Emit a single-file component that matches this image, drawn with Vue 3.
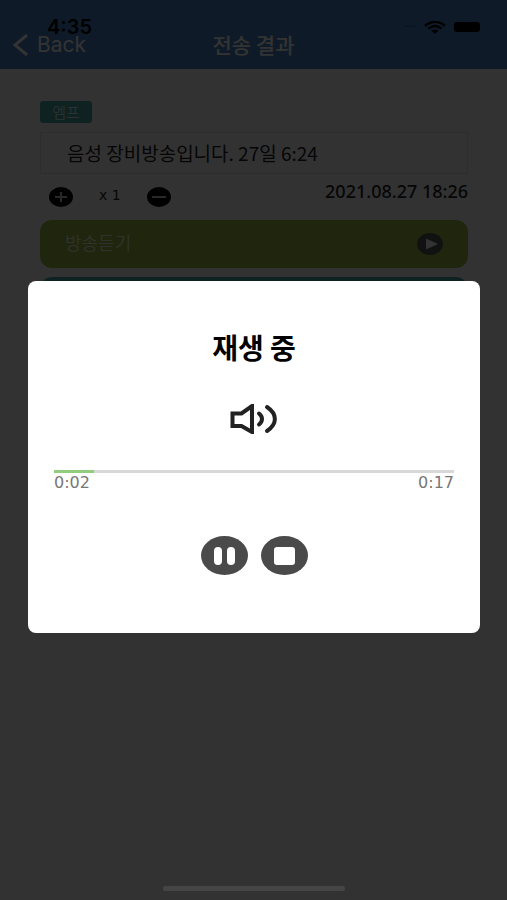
<script setup>
import { ref } from 'vue'

const count = ref(1)
const elapsed = ref(1.7)
const duration = ref(17)
</script>

<template>
  <div class="screen">
    <header class="header">
      <div class="status">
        <span class="clock">4:35</span>
        <span class="indicators">
          <span class="signal">····</span>
          <svg class="wifi" viewBox="0 0 22 13" aria-hidden="true">
            <path d="M1 4.8C7-.4 15-.4 21 4.8" />
            <path d="M4.5 7.6c4-3.2 9-3.2 13 0" />
            <path class="solid" d="M7.4 9.6c2.2-1.6 5-1.6 7.2 0L11 13z" />
          </svg>
          <span class="battery"></span>
        </span>
      </div>
      <nav class="nav">
        <button class="back" type="button">
          <svg viewBox="0 0 16 22" aria-hidden="true"><path d="M14 1 2 11l12 10" /></svg>
          <span>Back</span>
        </button>
        <h1>전송 결과</h1>
      </nav>
    </header>

    <main class="content">
      <span class="badge">엠프</span>
      <p class="message">음성 장비방송입니다. 27일 6:24</p>
      <div class="meta">
        <div class="stepper">
          <button type="button" aria-label="plus" @click="count++">
            <svg viewBox="0 0 24 20"><ellipse cx="12" cy="10" rx="12" ry="10" /><path d="M6 10h12M12 5v10" /></svg>
          </button>
          <span>x {{ count }}</span>
          <button type="button" aria-label="minus" @click="count--">
            <svg viewBox="0 0 24 20"><ellipse cx="12" cy="10" rx="12" ry="10" /><path d="M5 10h14" /></svg>
          </button>
        </div>
        <time datetime="2021-08-27T18:26">2021.08.27 18:26</time>
      </div>
      <button class="row listen" type="button">
        <span>방송듣기</span>
        <svg viewBox="0 0 26 22" aria-hidden="true">
          <ellipse cx="13" cy="11" rx="13" ry="11" />
          <path d="M9 5.500v11L21 11z" />
        </svg>
      </button>
      <div class="row next"></div>
    </main>

    <div class="overlay">
      <section class="dialog" role="dialog" aria-labelledby="dialog-title">
        <h2 id="dialog-title">재생 중</h2>
        <svg class="speaker" viewBox="0 0 48 30" aria-hidden="true">
          <path d="M2.500 9.500h9L22 2v26l-10.500-6h-9z" />
          <path d="M29 9.500c4 3.200 4 7.800 0 11" />
          <path d="M37 3c10.500 7 10.500 17 0 24" />
        </svg>
        <div class="track">
          <progress :value="elapsed" :max="duration" aria-labelledby="dialog-title"></progress>
          <div class="times"><span>0:02</span><span>0:17</span></div>
        </div>
        <div class="actions">
          <button type="button" aria-label="pause">
            <svg viewBox="0 0 47 39">
              <ellipse cx="23.500" cy="19.500" rx="23.500" ry="19.500" />
              <rect x="13" y="11" width="8" height="18" rx="4" />
              <rect x="26" y="11" width="8" height="18" rx="4" />
            </svg>
          </button>
          <button type="button" aria-label="stop">
            <svg viewBox="0 0 47 39">
              <ellipse cx="23.500" cy="19.500" rx="23.500" ry="19.500" />
              <rect x="13" y="11" width="21" height="18" rx="3" />
            </svg>
          </button>
        </div>
      </section>
      <div class="home"></div>
    </div>
  </div>
</template>

<style>
body {
  background: #fafafa;
}
</style>

<style scoped>
* {
  box-sizing: border-box;
}

.screen {
  min-height: 100vh;
  background: #fafafa;
  color: #222;
  font-family: "Noto Sans", "Noto Sans CJK KR", sans-serif;
}

button {
  padding: 0;
  border: 0;
  background: none;
  color: inherit;
  font: inherit;
}

svg {
  display: block;
}

h1,
h2,
p {
  margin: 0;
}

.header {
  padding: 18px 13px 15px;
  background: #4682c3;
}

.status {
  display: flex;
  justify-content: space-between;
  height: 18px;
  padding: 0 14px 0 34px;
  line-height: 18px;
  color: #000;
}

.clock {
  font-family: Inter, sans-serif;
  font-size: 20px;
  font-weight: 600;
}

.indicators {
  display: flex;
  align-items: center;
  gap: 8px;
}

.signal {
  font-size: 12px;
  opacity: 0.4;
}

.wifi {
  width: 22px;
  height: 13px;
  fill: none;
  stroke: #000;
  stroke-width: 2.4;
}

.wifi .solid {
  fill: #000;
  stroke: none;
}

.battery {
  width: 26px;
  height: 10px;
  border-radius: 3px;
  background: #000;
}

.nav {
  display: grid;
  grid-template-columns: 1fr auto 1fr;
  align-items: center;
  height: 18px;
  color: #fff;
}

.back {
  display: flex;
  align-items: center;
  gap: 8px;
  height: 18px;
  font-family: Inter, sans-serif;
  font-size: 21px;
  line-height: 18px;
}

.back svg {
  width: 16px;
  height: 22px;
  fill: none;
  stroke: #fff;
  stroke-width: 3;
}

h1 {
  padding-bottom: 2px;
  font-family: "Noto Sans CJK KR", sans-serif;
  font-size: 21px;
  font-weight: 500;
  line-height: 16px;
}

.content {
  display: flex;
  flex-direction: column;
  padding: 32px 39px 0 40px;
}

.badge {
  align-self: flex-start;
  width: 52px;
  border-radius: 3px;
  background: #41aaa4;
  color: #fff;
  font-family: "Noto Sans CJK KR", sans-serif;
  font-size: 15px;
  font-weight: 300;
  line-height: 22px;
  text-align: center;
}

.message {
  margin-top: 9px;
  padding: 0 26px;
  border: 1px solid #e0e0e0;
  font-family: "Noto Sans CJK KR", sans-serif;
  font-size: 19px;
  line-height: 40px;
}

.meta {
  display: flex;
  justify-content: space-between;
  height: 46px;
  padding: 6px 0 0 9px;
}

.stepper {
  display: flex;
  align-items: flex-start;
  gap: 26px;
  font-family: "DejaVu Sans", sans-serif;
  font-size: 14px;
  line-height: 30px;
}

.stepper button {
  padding-top: 7px;
}

.stepper svg {
  width: 24px;
  height: 20px;
  fill: #000;
  stroke: #ccc;
  stroke-width: 2;
}

.stepper ellipse {
  stroke: none;
}

time {
  font-size: 18px;
  font-weight: 500;
  line-height: 22px;
}

.row {
  display: flex;
  align-items: center;
  justify-content: space-between;
  height: 48px;
  padding: 0 25px;
  border-radius: 12px;
}

.listen {
  background: #9fbe46;
  color: #fff;
  font-family: "Noto Sans CJK KR", sans-serif;
  font-size: 18px;
  font-weight: 300;
}

.listen span {
  padding-bottom: 4px;
}

.listen svg {
  width: 26px;
  height: 22px;
  fill: #555;
}

.listen path {
  fill: #fff;
}

.next {
  margin-top: 9px;
  background: #41aaa4;
}

.overlay {
  position: fixed;
  inset: 0;
  display: flex;
  align-items: center;
  justify-content: center;
  padding: 14px 27px 0 28px;
  background: rgba(0, 0, 0, 0.8);
}

.dialog {
  display: flex;
  flex-direction: column;
  align-items: center;
  width: 100%;
  padding: 50px 26px 58px;
  border-radius: 8px;
  background: #fff;
}

h2 {
  color: #000;
  font-family: "Noto Sans CJK KR", sans-serif;
  font-size: 28px;
  font-weight: 700;
  line-height: 32px;
}

.speaker {
  width: 48px;
  height: 30px;
  margin-top: 41px;
  fill: none;
  stroke: #222;
  stroke-width: 4;
  stroke-linecap: round;
}

.track {
  width: 100%;
  margin-top: 36px;
}

progress {
  display: block;
  width: 100%;
  height: 3px;
  border: 0;
  appearance: none;
  background: #d8d8d8;
}

progress::-webkit-progress-bar {
  background: #d8d8d8;
}

progress::-webkit-progress-value {
  background: #92cc7e;
}

.times {
  display: flex;
  justify-content: space-between;
  color: #777;
  font-family: "DejaVu Sans", sans-serif;
  font-size: 16px;
  line-height: 20px;
}

.actions {
  display: flex;
  gap: 13px;
  margin-top: 43px;
}

.actions svg {
  width: 47px;
  height: 39px;
  fill: #4a4a4a;
}

.actions rect {
  fill: #fff;
}

.home {
  position: absolute;
  bottom: 9px;
  width: 36%;
  height: 5px;
  border-radius: 3px;
  background: #454545;
}
</style>
